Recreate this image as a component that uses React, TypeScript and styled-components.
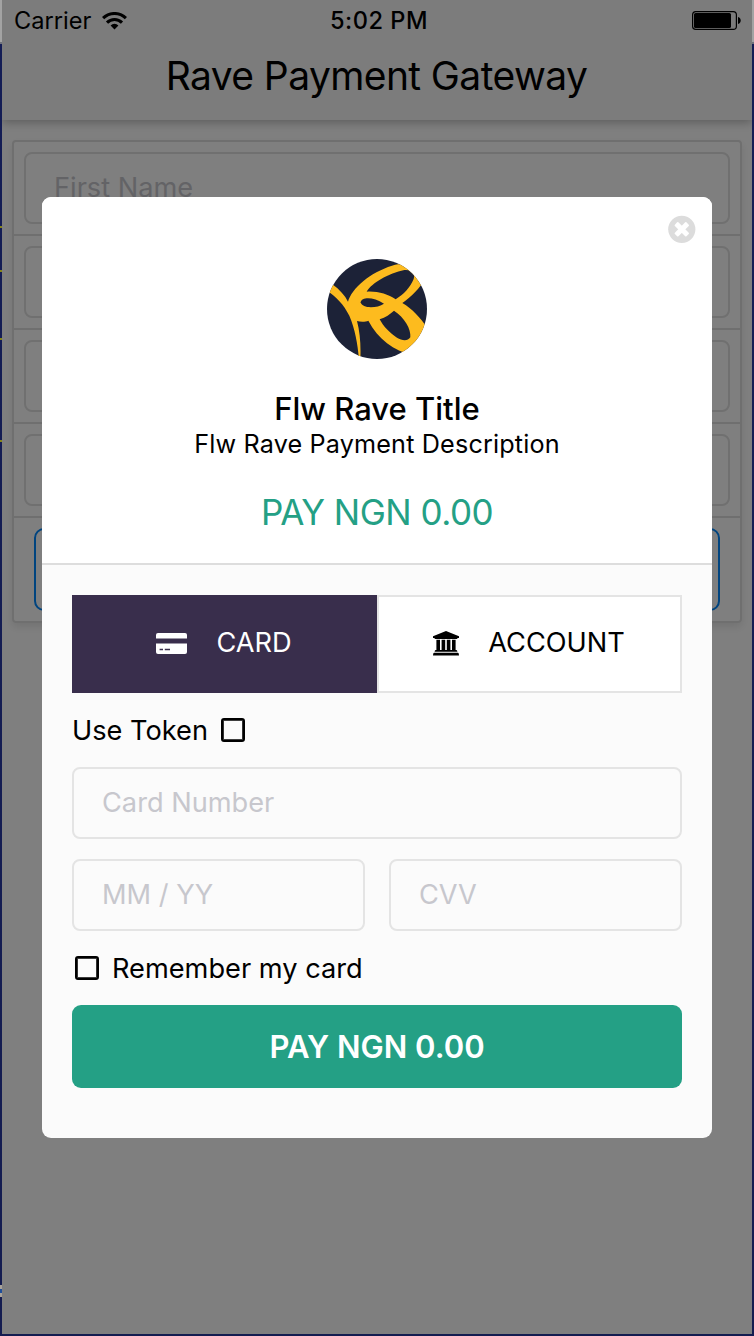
import React from 'react';
import styled, { createGlobalStyle } from 'styled-components';

const GlobalStyle = createGlobalStyle`
  * { box-sizing: border-box; }
  body { margin: 0; background: #131c50; font-family: Inter, "Liberation Sans", sans-serif; color: #000; }
  svg { display: block; flex: none; }
`;

const Desktop = styled.div`
  display: grid;
  grid-template-columns: 2px 750px 2px;
  grid-template-rows: 1334px 2px;
  width: 754px;
  height: 1336px;
  overflow: hidden;
`;

const Edge = styled.div<{ $ticks?: boolean }>`
  background: ${(p) =>
    p.$ticks
      ? `linear-gradient(#85851c, #85851c) 0 226px / 2px 2px no-repeat,
         linear-gradient(#85851c, #85851c) 0 270px / 2px 2px no-repeat,
         linear-gradient(#85851c, #85851c) 0 338px / 2px 2px no-repeat,
         linear-gradient(#85851c, #85851c) 0 440px / 2px 2px no-repeat,
         linear-gradient(#a9a39b 4px, #1f4f9c 4px 8px, #a9a39b 8px) 0 1285px / 2px 12px no-repeat,`
      : ''}
    linear-gradient(#a3a3a3 42px, #70727c 42px 44px, #141d55 44px, #141c50);
`;

const Phone = styled.div`
  position: relative;
  height: 1334px;
  background: #fff;
  overflow: hidden;
`;

const TopBar = styled.header`
  position: relative;
  height: 120px;
  background: #f8f8f8;
  box-shadow: 0 2px 10px rgba(0, 0, 0, 0.3);
`;

const PageTitle = styled.h1`
  margin: 0;
  padding: 41px 1px 0 0;
  line-height: 70px;
  text-align: center;
  font-size: 39px;
  font-weight: 400;
  letter-spacing: -0.6px;
`;

const FormCard = styled.section`
  margin: 20px 10px 0;
  border: 2px solid #dedede;
  border-radius: 4px;
  box-shadow: 0 4px 8px rgba(0, 0, 0, 0.1);
`;

const FormRow = styled.div`
  padding: 10px;
  border-bottom: 2px solid #dedede;
  &:last-child { border-bottom: 0; }
`;

const Field = styled.input<{ $dim?: boolean }>`
  display: block;
  width: 100%;
  min-width: 0;
  height: 72px;
  padding: 0 28px 2px;
  border: 2px solid ${(p) => (p.$dim ? '#e0e0e0' : '#e4e4e4')};
  border-radius: 8px;
  background: transparent;
  font: 400 27.2px Inter, "Liberation Sans", sans-serif;
  outline: none;
  &::placeholder { color: #c7c7cd; opacity: 1; }
`;

const OutlineButton = styled.button`
  display: block;
  width: calc(100% - 20px);
  height: 83px;
  margin: 0 10px;
  border: 2px solid #0088ff;
  border-radius: 10px;
  background: transparent;
`;

const Overlay = styled.div`
  position: absolute;
  inset: 0;
  display: flex;
  align-items: flex-start;
  justify-content: center;
  padding-top: 197px;
  background: rgba(0, 0, 0, 0.5);
`;

const StatusBar = styled.div`
  position: absolute;
  inset: 0 0 auto;
  display: grid;
  grid-template-columns: 1fr auto 1fr;
  align-items: center;
  height: 41px;
  padding: 0 11px 0 12px;
  font-size: 23.6px;
`;

const Carrier = styled.div`
  display: flex;
  align-items: center;
  gap: 11px;
`;

const Clock = styled.div`
  padding-left: 3px;
  font-weight: 500;
  letter-spacing: 0.5px;
`;

const Battery = styled.div`
  display: flex;
  justify-content: flex-end;
`;

const Modal = styled.div`
  width: 670px;
  height: 941px;
  border-radius: 9px;
  background: #fbfbfb;
  overflow: hidden;
`;

const ModalHeader = styled.div`
  position: relative;
  display: flex;
  flex-direction: column;
  align-items: center;
  height: 368px;
  padding-top: 62px;
  background: #fff;
  border-bottom: 2px solid #ddd;
`;

const CloseButton = styled.button`
  position: absolute;
  top: 18px;
  right: 16px;
  padding: 0;
  border: 0;
  background: none;
`;

const Title = styled.div`
  margin-top: 30px;
  font-size: 31px;
  font-weight: 500;
  line-height: 40px;
`;

const Description = styled.div`
  font-size: 25.2px;
  line-height: 30px;
  letter-spacing: 0.15px;
`;

const Amount = styled.div`
  margin-top: 33px;
  font-size: 35px;
  line-height: 40px;
  letter-spacing: -0.5px;
  color: #24a085;
`;

const ModalBody = styled.div`
  padding: 30px;
`;

const Tabs = styled.div`
  display: grid;
  grid-template-columns: 1fr 1fr;
  height: 98px;
`;

const Tab = styled.button<{ $active?: boolean }>`
  display: flex;
  align-items: center;
  justify-content: center;
  gap: 29px;
  padding: 0 1px 4px 0;
  border: ${(p) => (p.$active ? '0' : '2px solid #e4e4e4')};
  background: ${(p) => (p.$active ? '#392e4c' : '#fff')};
  color: ${(p) => (p.$active ? '#fff' : '#000')};
  font: 400 27.2px Inter, "Liberation Sans", sans-serif;

  svg { margin-top: 2px; }
`;

const CheckRow = styled.label<{ $first?: boolean }>`
  display: flex;
  align-items: center;
  gap: 13px;
  height: 74px;
  padding-left: ${(p) => (p.$first ? '0' : '3px')};
  font-size: 27.2px;
`;

const CheckBox = styled.span`
  width: 24px;
  height: 24px;
  border: 2px solid #000;
  border-radius: 3px;
  box-shadow: inset 0 0 0 0.8px #000;
`;

const FieldPair = styled.div`
  display: grid;
  grid-template-columns: 1fr 1fr;
  gap: 24px;
  margin-top: 20px;
`;

const PayButton = styled.button`
  display: block;
  width: 100%;
  height: 83px;
  padding: 0;
  border: 0;
  border-radius: 9px;
  background: #24a085;
  color: #fff;
  font: 600 31px Inter, "Liberation Sans", sans-serif;
`;

const WifiIcon = () => (
  <svg width="25" height="18" viewBox="0 0 25 18">
    <g fill="none" stroke="#000" strokeWidth="3.1">
      <path d="M1.1 6.2 A16.2 16.2 0 0 1 23.9 6.2" />
      <path d="M5 10.6 A10.6 10.6 0 0 1 20 10.6" />
    </g>
    <path d="M8.6 13.4 A5.6 5.6 0 0 1 16.4 13.4 L12.5 17.6 Z" />
  </svg>
);

const BatteryIcon = () => (
  <svg width="49" height="19" viewBox="0 0 49 19">
    <rect x="0.6" y="0.6" width="43.8" height="17.8" rx="3.2" fill="none" stroke="#000" strokeWidth="1.2" />
    <rect x="2" y="2" width="37" height="15" rx="1.6" />
    <path d="M46 6 C49.6 6.6 49.6 12.4 46 13 Z" />
  </svg>
);

const CloseIcon = () => (
  <svg width="28" height="28" viewBox="0 0 28 28">
    <circle cx="13.8" cy="14.3" r="13.6" fill="#dcdcdc" />
    <g fill="#fff" transform="rotate(45 13.8 14.3)">
      <rect x="5.6" y="11.8" width="16.4" height="5" rx="0.9" />
      <rect x="11.3" y="6.1" width="5" height="16.4" rx="0.9" />
    </g>
  </svg>
);

const Logo = () => (
  <svg width="100" height="100" viewBox="30 30 300 300">
    <defs>
      <clipPath id="disc"><circle cx="180" cy="180" r="150" /></clipPath>
    </defs>
    <g clipPath="url(#disc)">
      <rect x="30" y="30" width="300" height="300" fill="#1c2237" />
      <path
        fill="#fdbb1e"
        d="M30 96 L46 106 C68 122 84 140 93 158 C104 118 160 70 225 50 C250 42 272 46 290 58 L324 92 C308 116 284 142 256 162 C287 180 313 210 332 238 L330 300 L285 318 C232 305 182 270 154 215 C146 219 130 219 120 216 C129 250 132 290 130 330 L126 330 C122 285 114 240 97 200 C80 166 57 142 30 125 Z"
      />
      <path fill="#1c2237" d="M149 128 C165 101 215 73 262 63 C286 61 295 74 290 90 C280 115 260 136 236 151 C212 135 182 126 149 128 Z" />
      <path fill="#1c2237" d="M131 160 C134 144 168 143 201 164 C180 178 136 180 131 160 Z" />
      <path fill="#1c2237" d="M188 211 C206 205 219 196 231 185 C262 205 283 240 280 265 C272 277 255 275 240 266 C218 252 199 232 188 211 Z" />
    </g>
  </svg>
);

const CardIcon = () => (
  <svg width="31" height="21" viewBox="0 0 31 21">
    <path fill="#fff" d="M2 0 H29 Q31 0 31 2 V5.4 H0 V2 Q0 0 2 0 Z" />
    <path fill="#fff" d="M0 10.4 H31 V19 Q31 21 29 21 H2 Q0 21 0 19 Z" />
    <path stroke="#392e4c" strokeWidth="1.3" d="M3.6 16.5 H7 M8.8 16.5 H14" />
  </svg>
);

const BankIcon = () => (
  <svg width="26" height="25" viewBox="0 0 26 25">
    <path d="M13 0 L26 5.2 V7 H24.6 Q24.4 7.9 23.6 7.9 H2.4 Q1.6 7.9 1.4 7 H0 V5.2 Z" />
    <path d="M3.4 8.7 H7 V19 H8.6 V8.7 H12.2 V19 H13.8 V8.7 H17.4 V19 H19 V8.7 H22.6 V19 H23.3 Q24.3 19.1 24.4 20.8 H1.6 Q1.7 19.1 2.7 19 H3.4 Z" />
    <path d="M1 21.8 H25 Q26 21.9 26 24.4 H0 Q0 21.9 1 21.8 Z" />
  </svg>
);

export default function App() {
  return (
    <>
      <GlobalStyle />
      <Desktop>
        <Edge $ticks />
        <Phone>
          <TopBar>
            <PageTitle>Rave Payment Gateway</PageTitle>
          </TopBar>
          <FormCard>
            <FormRow><Field $dim placeholder="First Name" /></FormRow>
            <FormRow><Field $dim /></FormRow>
            <FormRow><Field $dim /></FormRow>
            <FormRow><Field $dim /></FormRow>
            <FormRow><OutlineButton /></FormRow>
          </FormCard>
          <Overlay>
            <Modal>
              <ModalHeader>
                <CloseButton aria-label="Close"><CloseIcon /></CloseButton>
                <Logo />
                <Title>Flw Rave Title</Title>
                <Description>Flw Rave Payment Description</Description>
                <Amount>PAY NGN 0.00</Amount>
              </ModalHeader>
              <ModalBody>
                <Tabs>
                  <Tab $active><CardIcon />CARD</Tab>
                  <Tab><BankIcon />ACCOUNT</Tab>
                </Tabs>
                <CheckRow $first>Use Token<CheckBox /></CheckRow>
                <Field placeholder="Card Number" />
                <FieldPair>
                  <Field placeholder="MM / YY" />
                  <Field placeholder="CVV" />
                </FieldPair>
                <CheckRow><CheckBox />Remember my card</CheckRow>
                <PayButton>PAY NGN 0.00</PayButton>
              </ModalBody>
            </Modal>
          </Overlay>
          <StatusBar>
            <Carrier>Carrier<WifiIcon /></Carrier>
            <Clock>5:02 PM</Clock>
            <Battery><BatteryIcon /></Battery>
          </StatusBar>
        </Phone>
        <Edge />
      </Desktop>
    </>
  );
}
